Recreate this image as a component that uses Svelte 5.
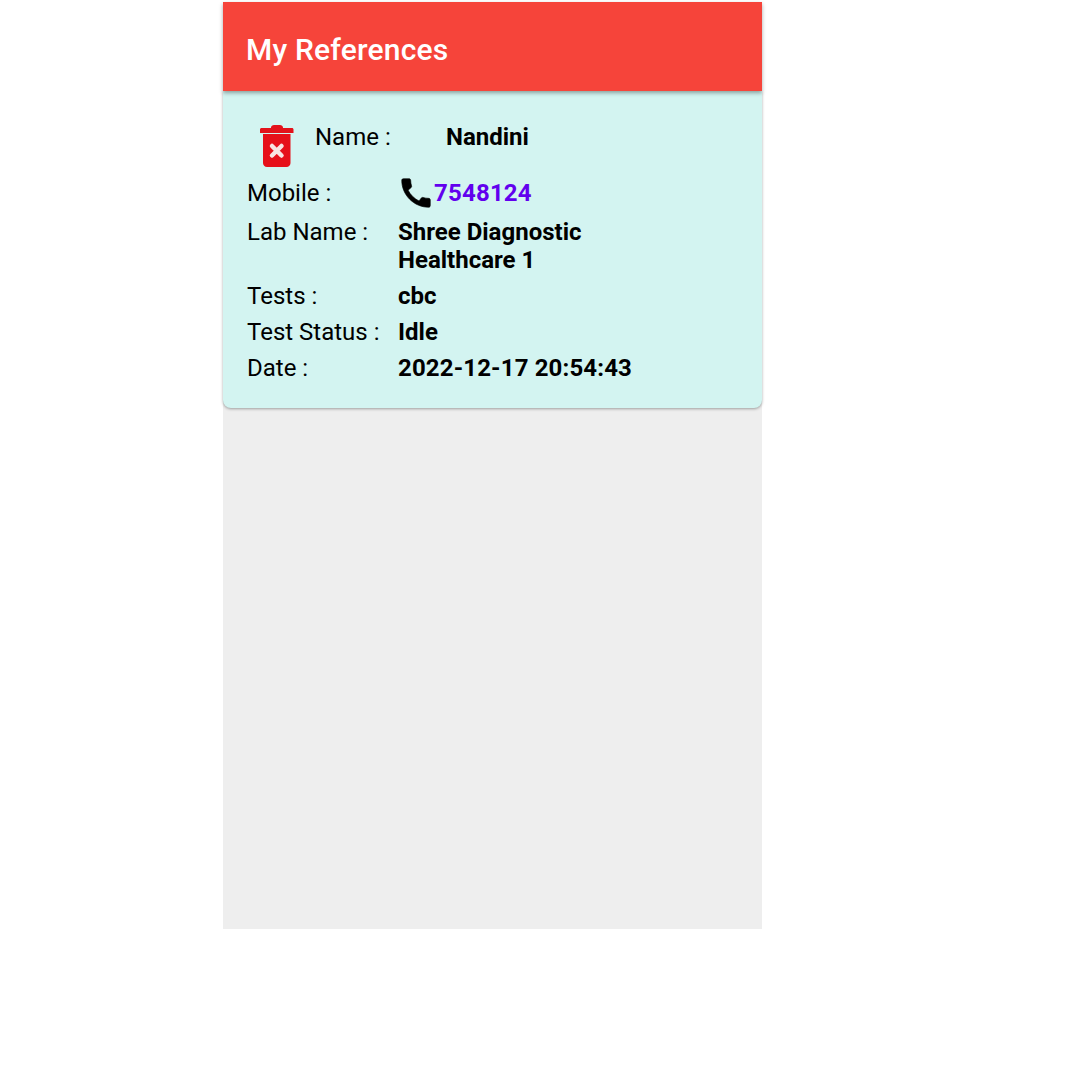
<script lang="ts">
  const rows = [
    { label: 'Lab Name :', value: 'Shree Diagnostic Healthcare 1', cls: 'lab' },
    { label: 'Tests :', value: 'cbc', cls: 'tests' },
    { label: 'Test Status :', value: 'Idle', cls: 'status' },
    { label: 'Date :', value: '2022-12-17 20:54:43', cls: 'date' },
  ];
</script>

<div class="screen">
  <header class="appbar">
    <h1>My References</h1>
  </header>
  <main class="list">
    <article class="card">
      <div class="name-row">
        <svg class="trash" viewBox="0 0 36 44" width="36" height="44" aria-hidden="true">
          <path d="M12 3.500C12 2 13.500 1 15 1h6c1.500 0 3 1 3 2.500V4h9c.8 0 1.500.7 1.500 1.500V9H1V5.500C1 4.700 1.700 4 2.500 4H12z" fill="#e3121b" />
          <path d="M4 10h27.500v29c0 2.300-1.700 4-4 4H8c-2.300 0-4-1.700-4-4z" fill="#e6101a" />
          <path d="M13 22l9.500 9.500M22.500 22L13 31.500" stroke="#f8e4e2" stroke-width="4.500" stroke-linecap="round" fill="none" />
        </svg>
        <span class="label name-label">Name :</span>
        <span class="value">Nandini</span>
      </div>
      <div class="row mobile">
        <span class="label">Mobile :</span>
        <span class="value phone">
          <svg viewBox="0 0 24 24" width="38" height="38" aria-hidden="true">
            <path d="M20.010 15.380c-1.230 0-2.420-.2-3.530-.56-.35-.12-.74-.03-1.010.24l-1.570 1.970c-2.830-1.350-5.480-3.900-6.890-6.830l1.950-1.660c.27-.28.350-.67.240-1.020-.37-1.110-.56-2.300-.56-3.530 0-.54-.45-.99-.99-.99H4.190C3.650 3 3 3.240 3 3.990 3 13.280 10.730 21 20.010 21c.71 0 .99-.63.99-1.180v-3.450c0-.54-.45-.99-.99-.99z" fill="#000" stroke="#000" stroke-width="0.4" />
          </svg>
          <a href="tel:7548124">7548124</a>
        </span>
      </div>
      {#each rows as row}
        <div class="row {row.cls}">
          <span class="label">{row.label}</span>
          <span class="value">{row.value}</span>
        </div>
      {/each}
    </article>
  </main>
</div>

<style>
  :global(body) {
    background: #fff;
  }
  .screen {
    width: 539px;
    height: 927px;
    margin: 2px 0 0 223px;
    display: flex;
    flex-direction: column;
    background: #eeeeee;
    font-family: Roboto, "Liberation Sans", sans-serif;
    color: #000;
  }
  .appbar {
    height: 89px;
    flex: 0 0 auto;
    display: flex;
    align-items: center;
    padding: 0 23px;
    background: #f6443a;
    box-shadow: 0 2px 4px rgba(0, 0, 0, 0.35);
    position: relative;
    z-index: 1;
  }
  h1 {
    margin: 5px 0 0;
    font-size: 30px;
    font-weight: 500;
    letter-spacing: 0.2px;
    color: #fff;
  }
  .card {
    height: 317px;
    box-sizing: border-box;
    padding: 28px 24px 0;
    background: #d3f4f1;
    border-radius: 0 0 8px 8px;
    box-shadow: 0 1px 3px rgba(0, 0, 0, 0.35);
    font-size: 24px;
    line-height: 28px;
  }
  .name-row {
    display: flex;
    align-items: flex-start;
    height: 50px;
    padding-top: 4px;
  }
  .trash {
    margin: 1px 20px 0 12px;
    flex: 0 0 auto;
  }
  .name-label {
    width: 131px;
    flex: 0 0 auto;
  }
  .row {
    display: grid;
    grid-template-columns: 151px 1fr;
  }
  .value {
    font-weight: 700;
  }
  .lab .value {
    max-width: 240px;
  }
  .mobile {
    height: 39px;
    margin-bottom: 6px;
    align-items: center;
  }
  .phone {
    display: flex;
    align-items: center;
  }
  .phone svg {
    margin-left: -1px;
    margin-right: -1px;
  }
  .phone a {
    color: #6200ee;
    text-decoration: none;
    letter-spacing: 0.2px;
  }
  .tests,
  .status,
  .date {
    margin-top: 8px;
  }
  .date .value {
    letter-spacing: 0.15px;
  }
</style>
